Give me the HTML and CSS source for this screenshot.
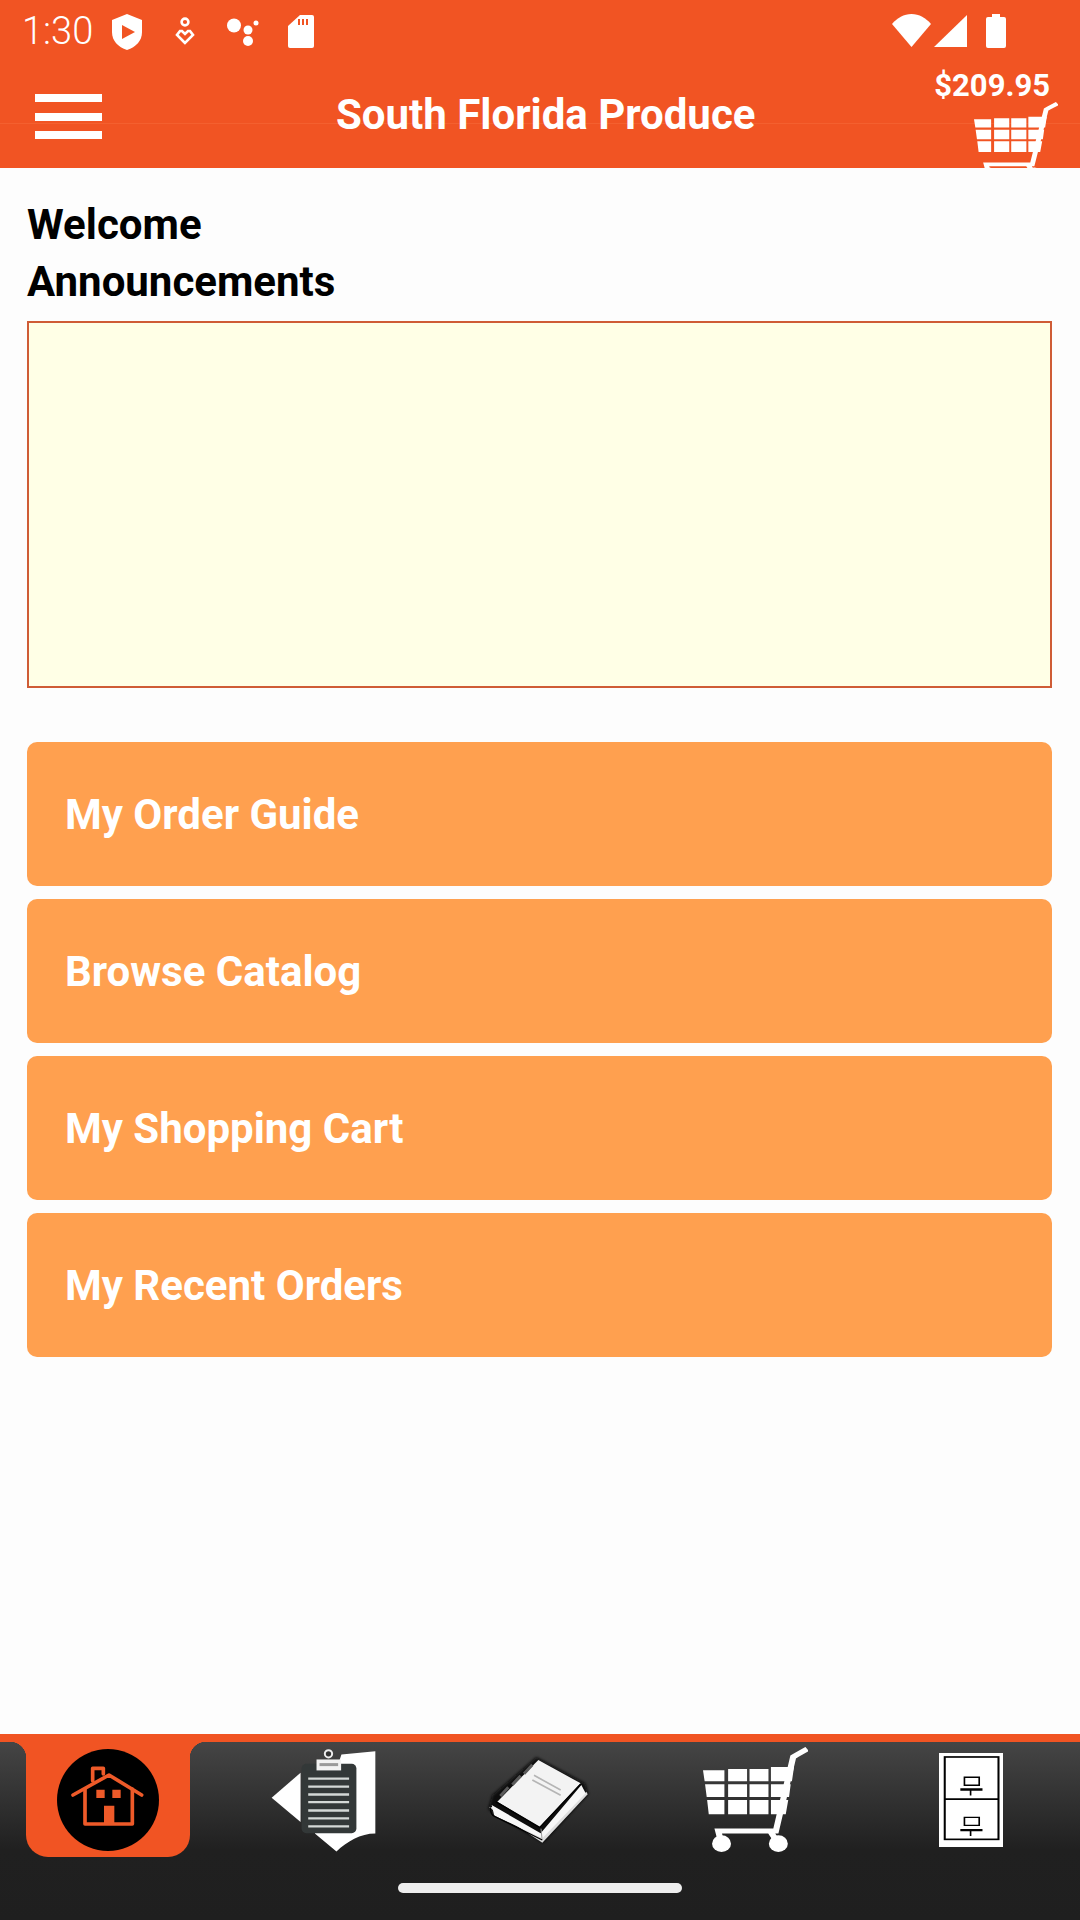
FILE: index.html
```html
<!DOCTYPE html>
<html lang="en">
<head>
<meta charset="utf-8">
<title>South Florida Produce</title>
<link rel="stylesheet" href="styles.css">
</head>
<body>
<svg class="defs" width="0" height="0" aria-hidden="true">
  <defs>
    <filter id="soft" x="-20%" y="-20%" width="140%" height="140%"><feGaussianBlur stdDeviation="5"/></filter>
    <filter id="soft-sm" x="-20%" y="-60%" width="140%" height="220%"><feGaussianBlur stdDeviation="1.500"/></filter>
  </defs>
  <symbol id="cart" viewBox="645 80 255 315" preserveAspectRatio="none">
    <g fill="#fff">
      <path d="M645 150h52v33h-48zM706 146h46v37h-46zM758 146h46v37h-46zM810 140h56l-5 43h-51z"/>
      <path d="M650 192h47v38h-43zM706 192h46v38h-46zM758 192h46v38h-46zM810 192h48l-4 38h-44z"/>
      <path d="M655 239h42v43h-38zM706 239h46v43h-46zM758 239h46v43h-46zM810 239h42l-6 43h-36z"/>
    </g>
    <path d="M898 86l-26 18-8 6-42 222H682l8 38M808 332l20 38" fill="none" stroke="#fff" stroke-width="15"/>
    <ellipse cx="690" cy="370" rx="23" ry="25" fill="#fff"/>
    <ellipse cx="828" cy="370" rx="23" ry="25" fill="#fff"/>
  </symbol>
</svg>

<header class="app-header">
  <div class="status-bar">
    <span class="clock">1:30</span>
    <svg class="st-shield" viewBox="0 0 30 36"><path d="M15 0l15 6v12c0 9-6 15-15 18C6 33 0 27 0 18V6z" fill="#fff"/><path d="M10 11l13 7-13 7z" fill="#f15423"/></svg>
    <svg class="st-heart" viewBox="0 0 20 28" fill="none" stroke="#fff" stroke-width="2.6"><circle cx="10" cy="5" r="3.4"/><path d="M10 26l-8-8 3-4h2l3 3 3-3h2l3 4z"/></svg>
    <svg class="st-dots" viewBox="0 0 33 28" fill="#fff"><circle cx="8" cy="7.500" r="7"/><circle cx="22" cy="12" r="4.500"/><circle cx="30" cy="5" r="2.500"/><circle cx="22" cy="23" r="5"/></svg>
    <svg class="st-sd" viewBox="0 0 26 33"><path d="M12 0h12a2 2 0 0 1 2 2v29a2 2 0 0 1-2 2H2a2 2 0 0 1-2-2V11z" fill="#fff"/><path d="M10 4h2v6h-2zM14 4h2v6h-2zM18 4h2v6h-2z" fill="#f15423"/></svg>
    <span class="status-spacer"></span>
    <svg class="st-wifi" viewBox="0 0 39 33"><path d="M0 10C5 4 12 0 19.500 0S34 4 39 10L19.500 33z" fill="#fff"/></svg>
    <svg class="st-signal" viewBox="0 0 33 32"><path d="M33 0v32H0z" fill="#fff"/></svg>
    <svg class="st-battery" viewBox="0 0 20 34"><path d="M6 0h8v3h4a2 2 0 0 1 2 2v27a2 2 0 0 1-2 2H2a2 2 0 0 1-2-2V5a2 2 0 0 1 2-2h4z" fill="#fff"/></svg>
  </div>
  <div class="toolbar">
    <div class="menu-button"><span></span><span></span><span></span></div>
    <div class="title">South Florida Produce</div>
    <div class="cart-summary">
      <div class="price">$209.95</div>
      <svg class="header-cart"><use href="#cart"/></svg>
    </div>
  </div>
</header>

<main class="content">
  <h1 class="heading">Welcome<br>Announcements</h1>
  <div class="announcements"></div>
  <div class="actions">
    <a class="action">My Order Guide</a>
    <a class="action">Browse Catalog</a>
    <a class="action">My Shopping Cart</a>
    <a class="action">My Recent Orders</a>
  </div>
</main>

<nav class="bottom-nav">
  <div class="tabs">
    <div class="tab tab-active">
      <svg class="ic-home" viewBox="169 85 306 306">
        <circle cx="322" cy="238" r="153" fill="#000"/>
        <g fill="none" stroke="#ee5a29" stroke-width="11" stroke-linecap="round" stroke-linejoin="round">
          <path d="M217 223l108-60 98 60"/>
          <path d="M253 205v105h142V205"/>
          <path d="M276 180v-37h32v17"/>
        </g>
        <path d="M287 207h25v25h-25zM335 207h25v25h-25zM310 255h31v55h-31z" fill="#ee5a29"/>
      </svg>
    </div>
    <div class="tab">
      <svg class="ic-doc" viewBox="810 78 322 318">
        <path d="M815 230l87-75v148z" fill="#fff"/>
        <path d="M1025 100l102-10v248c-45 0-85 24-117 54l-65-54z" fill="#fff"/>
        <rect x="905" y="128" width="165" height="209" rx="14" fill="#333838"/>
        <path d="M925 169h123v7H925zM925 193h123v7H925zM925 217h123v7H925zM925 240h123v7H925zM925 265h123v7H925zM925 289h123v7H925zM925 313h123v7H925z" fill="#d4d8d6"/>
        <rect x="950" y="115" width="74" height="33" fill="#f2f2f2"/>
        <rect x="959" y="126" width="56" height="9" fill="#9a9a9a" filter="url(#soft-sm)"/>
        <circle cx="986" cy="98" r="11" fill="#333" stroke="#eee" stroke-width="6"/>
      </svg>
    </div>
    <div class="tab">
      <svg class="ic-book" viewBox="0 0 360 300">
        <path d="M172 22l146 78 10 32-136 146L28 178l12-42z" fill="#0a0a0a" filter="url(#soft)"/>
        <path d="M30 172l160 106 136-145-4-8-132 134L44 170z" fill="#ddd"/>
        <path d="M38 165l147 85 122-145 13 25-130 135L46 197z" fill="#f7f7f7"/>
        <path d="M178 30l127 70-123 132L55 155z" fill="#f3f3f3"/>
        <path d="M50 155l132 77 123-130" fill="none" stroke="#000" stroke-width="4"/>
        <path d="M35 172c-2 13 3 23 13 28l142 70" fill="none" stroke="#000" stroke-width="4"/>
        <path d="M186 236l3 30" stroke="#999" stroke-width="3"/>
        <path d="M165 76l80 44M160 90l85 46" stroke="#b5b5b5" stroke-width="5" filter="url(#soft-sm)"/>
        <path d="M64 138l24-26M100 104l25-27M135 71l25-27" stroke="#5a5a5a" stroke-width="9"/>
      </svg>
    </div>
    <div class="tab">
      <svg class="ic-cart"><use href="#cart"/></svg>
    </div>
    <div class="tab">
      <svg class="ic-cabinet" viewBox="1222 95 156 283" preserveAspectRatio="none">
        <rect x="1222" y="95" width="156" height="283" fill="#fff"/>
        <rect x="1236" y="107" width="131" height="248" fill="none" stroke="#000" stroke-width="5"/>
        <path d="M1236 234h131" stroke="#000" stroke-width="5"/>
        <path d="M1284 168h36v24h-36zM1284 289h36v24h-36z" fill="none" stroke="#000" stroke-width="4"/>
        <path d="M1274 205h54M1274 327h54" stroke="#000" stroke-width="7"/>
        <path d="M1299 205v18M1299 327v18" stroke="#000" stroke-width="4"/>
      </svg>
    </div>
  </div>
  <div class="home-pill"></div>
</nav>
</body>
</html>
```

FILE: styles.css
```css
* { box-sizing: border-box; }

html, body { margin: 0; padding: 0; }

body {
  width: 1080px;
  height: 1920px;
  display: flex;
  flex-direction: column;
  overflow: hidden;
  background: #fdfdfd;
  font-family: Roboto, "Liberation Sans", sans-serif;
}

.defs { position: absolute; }

/* Header */
.app-header {
  height: 168px;
  flex: none;
  overflow: hidden;
  color: #fff;
  background: linear-gradient(#f15423 123px, #f4602f 123px, #f4602f 124px, #f15423 124px);
}

.status-bar {
  height: 62px;
  display: flex;
  align-items: flex-start;
  padding-left: 22px;
}

.clock {
  font-size: 38px;
  font-weight: 300;
  line-height: 36px;
  margin-top: 13px;
  width: 90px;
}

.st-shield { width: 30px; height: 36px; margin-top: 14px; }
.st-heart { width: 20px; height: 28px; margin: 17px 0 0 33px; }
.st-dots { width: 33px; height: 28px; margin: 18px 0 0 31px; }
.st-sd { width: 26px; height: 33px; margin: 15px 0 0 29px; }
.status-spacer { flex: 1; }
.st-wifi { width: 39px; height: 33px; margin-top: 14px; }
.st-signal { width: 33px; height: 32px; margin: 15px 0 0 3px; }
.st-battery { width: 20px; height: 34px; margin: 14px 74px 0 19px; }

.toolbar {
  height: 106px;
  display: flex;
  align-items: flex-start;
  padding-left: 35px;
}

.menu-button {
  width: 67px;
  margin-top: 32px;
  display: flex;
  flex-direction: column;
  gap: 10.500px;
}

.menu-button span {
  display: block;
  height: 8px;
  background: #fff;
}

.title {
  margin: 28px 0 0 234px;
  font-size: 42px;
  font-weight: 700;
  line-height: 50px;
  white-space: nowrap;
}

.cart-summary {
  margin-left: auto;
  padding-right: 22px;
  display: flex;
  flex-direction: column;
  align-items: flex-end;
}

.price {
  margin: 6px 8px 0 0;
  font-size: 31px;
  font-weight: 700;
  line-height: 35px;
}

.header-cart {
  display: block;
  width: 84px;
  height: 78px;
  margin-top: -1px;
}

/* Content */
.content {
  flex: 1;
  padding: 28px 28px 0 27px;
}

.heading {
  margin: 0;
  font-size: 42px;
  font-weight: 700;
  line-height: 57px;
  color: #000;
}

.announcements {
  height: 367px;
  margin-top: 11px;
  background: #ffffe6;
  border: 2px solid #cf5c36;
}

.actions {
  margin-top: 54px;
  display: flex;
  flex-direction: column;
  gap: 13px;
}

.action {
  height: 144px;
  display: flex;
  align-items: center;
  padding-left: 38px;
  border-radius: 10px;
  background: #ffa04f;
  color: #fff;
  font-size: 42px;
  font-weight: 700;
}

/* Bottom nav */
.bottom-nav {
  flex: none;
  height: 186px;
  border-top: 8px solid #f15423;
  background: linear-gradient(#454545 0, #202020 108px, #1f1f1f 100%);
}

.tabs {
  height: 115px;
  display: grid;
  grid-template-columns: repeat(5, 216px);
}

.tab {
  position: relative;
  display: flex;
  align-items: center;
  justify-content: center;
  padding-right: 2px;
}

.tab-active {
  width: 164px;
  margin-left: 26px;
  padding-right: 0;
  background: #f15423;
  border-radius: 0 0 22px 22px;
}

.tab-active::before,
.tab-active::after {
  content: "";
  position: absolute;
  top: 0;
  width: 16px;
  height: 16px;
}

.tab-active::before {
  left: -16px;
  background: radial-gradient(circle at 0 100%, transparent 16px, #f15423 16.500px);
}

.tab-active::after {
  right: -16px;
  background: radial-gradient(circle at 100% 100%, transparent 16px, #f15423 16.500px);
}

.ic-home { width: 102px; height: 102px; }
.ic-doc { width: 107px; height: 106px; }
.ic-book { width: 120px; height: 100px; }
.ic-cart { width: 105px; height: 105px; }
.ic-cabinet { width: 64px; height: 94px; }

.home-pill {
  width: 284px;
  height: 10px;
  margin: 26px auto 0;
  border-radius: 5px;
  background: #eee;
}
```
